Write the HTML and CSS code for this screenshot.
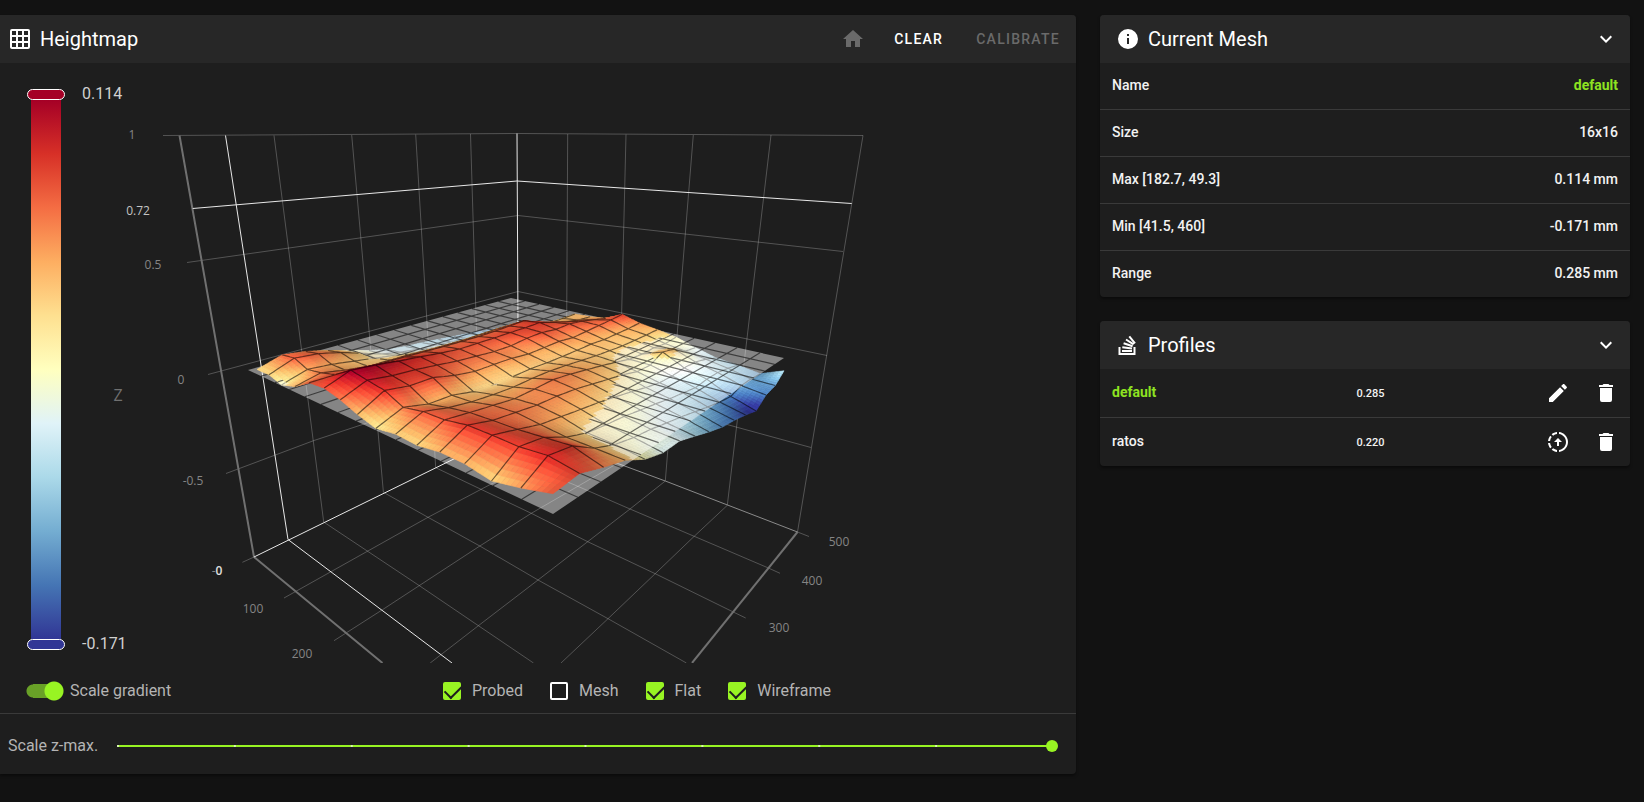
FILE: index.html
```html
<!DOCTYPE html>
<html lang="en">
<head>
<meta charset="utf-8">
<title>Heightmap</title>
<link rel="stylesheet" href="styles.css">
</head>
<body>
<main class="page">
  <section class="card heightmap">
    <header class="card-header card-header-flush">
      <svg class="icon" viewBox="0 0 24 24" aria-hidden="true"><path d="M10,4V8H14V4H10M16,4V8H20V4H16M16,10V14H20V10H16M16,16V20H20V16H16M14,20V16H10V20H14M8,20V16H4V20H8M8,14V10H4V14H8M8,8V4H4V8H8M10,14H14V10H10V14M4,2H20A2,2 0 0,1 22,4V20A2,2 0 0,1 20,22H4C2.92,22 2,21.1 2,20V4A2,2 0 0,1 4,2Z"/></svg>
      <h2 class="title">Heightmap</h2>
      <div class="actions">
        <button class="icon-button" type="button" disabled aria-label="Home"><svg class="icon" viewBox="0 0 24 24"><path d="M10,20V14H14V20H19V12H22L12,3L2,12H5V20H10Z"/></svg></button>
        <button class="text-button" type="button">CLEAR</button>
        <button class="text-button" type="button" disabled>CALIBRATE</button>
      </div>
    </header>

    <div class="chart">
      <svg class="plot" viewBox="0 63 1076 600" role="img" aria-label="Bed mesh surface">
        <g class="grid">
          <path d="M163 135.5L517 133.5L863 135.5"/>
          <path d="M187 262.5L518 215.5L843 251.5M208 374.5L518 291.5L827 355.5M226 473.5L314 440.5L364 424L519 366L736 427L811 447.5"/>
          <path d="M274 135.5L323.7 522M351.7 135L383.4 492.3M415.7 134.5L435.7 467.7M470.5 134L480 447"/>
          <path d="M567.7 134L566 445M626 134.5L618 463M693.3 135L665.3 481M771 135L727.3 505.3M863 135.5L797.5 532"/>
          <path d="M242.4 562.3L254 557M284 598L428 517.3L483 488.3L566 445M334 640.7L382 610L479.8 546L531.3 513.3L618 463M430.2 663L478.4 625.7L538 580L587.7 541.7L630 509L665.3 481M561 663L608 618.7L655.2 573.7L694.2 536.3L727.3 505.3"/>
          <path d="M323.7 522L368.3 551.7L418.8 585.3L478.4 625.7L533.5 663M383.4 492.3L428 517.3L479.8 546L538 580L608 618.7L686.4 663M435.7 467.7L531.3 513.3L587.7 541.7L655.2 573.7L733.3 612L745.7 618M480 447L574.8 485L630 509L694.2 536.3L767.7 567.7L780 573.3M797.5 532L809 536.5"/>
        </g>
        <g class="axis">
          <path d="M179.5 135.5L254 557L382.5 663"/>
          <path d="M692 663L797.5 532"/>
          <path class="axis-thin" d="M519 427L665.3 481L797.5 532"/>
        </g>
        <g class="pointer">
          <path d="M225.5 135.5L288 539.5L452 663M254 557L519 427M192.7 208.5L517 181L851.7 203.5M517 133.5L518.5 427"/>
        </g>
        <g id="surface"></g>
        <g class="labels">
          <text x="132" y="139">1</text>
          <text class="strong" x="138" y="215">0.72</text>
          <text x="153" y="269">0.5</text>
          <text x="181" y="384">0</text>
          <text class="axis-name" x="118" y="401">Z</text>
          <text x="193" y="485">-0.5</text>
          <text x="217" y="575">-<tspan class="cursor-value">0</tspan></text>
          <text x="253" y="613">100</text>
          <text x="302" y="658">200</text>
          <text x="779" y="632">300</text>
          <text x="812" y="585">400</text>
          <text x="839" y="546">500</text>
        </g>
      </svg>
      <div class="legend">
        <div class="legend-scale"><span class="knob knob-top"></span><span class="ramp"></span><span class="knob knob-bottom"></span></div>
        <div class="legend-values"><span>0.114</span><span>-0.171</span></div>
      </div>
    </div>

    <div class="options">
      <label class="switch"><input type="checkbox" role="switch" checked>Scale gradient</label>
      <div class="checks">
        <label class="check"><input type="checkbox" checked>Probed</label>
        <label class="check"><input type="checkbox">Mesh</label>
        <label class="check"><input type="checkbox" checked>Flat</label>
        <label class="check"><input type="checkbox" checked>Wireframe</label>
      </div>
    </div>

    <div class="scale-row">
      <label for="zmax">Scale z-max.</label>
      <input id="zmax" class="slider" type="range" min="0" max="8" value="8">
    </div>
  </section>

  <div class="side">
    <section class="card">
      <header class="card-header">
        <svg class="icon" viewBox="0 0 24 24" aria-hidden="true"><path d="M13,9H11V7H13M13,17H11V11H13M12,2A10,10 0 0,0 2,12A10,10 0 0,0 12,22A10,10 0 0,0 22,12A10,10 0 0,0 12,2Z"/></svg>
        <h2 class="title">Current Mesh</h2>
        <button class="icon-button" type="button" aria-label="Collapse current mesh"><svg class="icon" viewBox="0 0 24 24"><path d="M7.41,8.58L12,13.17L16.59,8.58L18,10L12,16L6,10L7.41,8.58Z"/></svg></button>
      </header>
      <table class="facts">
        <tbody>
          <tr><th scope="row">Name</th><td class="active">default</td></tr>
          <tr><th scope="row">Size</th><td>16x16</td></tr>
          <tr><th scope="row">Max [182.7, 49.3]</th><td>0.114 mm</td></tr>
          <tr><th scope="row">Min [41.5, 460]</th><td>-0.171 mm</td></tr>
          <tr><th scope="row">Range</th><td>0.285 mm</td></tr>
        </tbody>
      </table>
    </section>

    <section class="card">
      <header class="card-header">
        <svg class="icon icon-lines" viewBox="0 0 24 24" aria-hidden="true"><path d="M3.5 14V21H18.5V14M6 18H16M6.3 14.3L16 15.5M7.6 10.3L16.6 13.2M10 6.5L17.6 11.3M13.3 3.3L19 10.3"/></svg>
        <h2 class="title">Profiles</h2>
        <button class="icon-button" type="button" aria-label="Collapse profiles"><svg class="icon" viewBox="0 0 24 24"><path d="M7.41,8.58L12,13.17L16.59,8.58L18,10L12,16L6,10L7.41,8.58Z"/></svg></button>
      </header>
      <table class="profiles">
        <tbody>
          <tr>
            <th scope="row" class="active">default</th>
            <td class="range">0.285</td>
            <td class="tools"><div class="tool-list">
              <button class="icon-button" type="button" aria-label="Rename default"><svg class="icon" viewBox="0 0 24 24"><path d="M20.71,7.04C21.1,6.65 21.1,6 20.71,5.63L18.37,3.29C18,2.9 17.35,2.9 16.96,3.29L15.12,5.12L18.87,8.87M3,17.25V21H6.75L17.81,9.93L14.06,6.18L3,17.25Z"/></svg></button>
              <button class="icon-button" type="button" aria-label="Delete default"><svg class="icon" viewBox="0 0 24 24"><path d="M19,4H15.5L14.5,3H9.5L8.5,4H5V6H19M6,19A2,2 0 0,0 8,21H16A2,2 0 0,0 18,19V7H6V19Z"/></svg></button>
            </div></td>
          </tr>
          <tr>
            <th scope="row">ratos</th>
            <td class="range">0.220</td>
            <td class="tools"><div class="tool-list">
              <button class="icon-button" type="button" aria-label="Load ratos"><svg class="icon" viewBox="0 0 24 24"><path d="M13,2.03V4.05C17.39,4.59 20.5,8.58 19.96,12.97C19.5,16.61 16.64,19.5 13,19.93V21.93C18.5,21.38 22.5,16.5 21.95,11C21.5,6.25 17.73,2.5 13,2.03M11,2.06C9.05,2.25 7.19,3 5.67,4.26L7.1,5.74C8.22,4.84 9.57,4.26 11,4.06V2.06M4.26,5.67C3,7.19 2.25,9.04 2.05,11H4.05C4.24,9.58 4.8,8.23 5.69,7.1L4.26,5.67M2.06,13C2.26,14.96 3.03,16.81 4.27,18.33L5.69,16.9C4.81,15.77 4.24,14.42 4.06,13H2.06M7.1,18.37L5.67,19.74C7.18,21 9.04,21.79 11,22V20C9.58,19.82 8.23,19.25 7.1,18.37M12,8L8,12H11V16H13V12H16L12,8Z"/></svg></button>
              <button class="icon-button" type="button" aria-label="Delete ratos"><svg class="icon" viewBox="0 0 24 24"><path d="M19,4H15.5L14.5,3H9.5L8.5,4H5V6H19M6,19A2,2 0 0,0 8,21H16A2,2 0 0,0 18,19V7H6V19Z"/></svg></button>
            </div></td>
          </tr>
        </tbody>
      </table>
    </section>
  </div>
</main>
<script src="surface.js"></script>
</body>
</html>
```

FILE: styles.css
```css
* { box-sizing: border-box; }

body {
  margin: 0;
  min-height: 100vh;
  background: #121212;
  color: #fff;
  font-family: Roboto, "Liberation Sans", sans-serif;
  font-size: 14px;
}

.page {
  display: grid;
  grid-template-columns: 1076fr 530fr;
  align-items: start;
  gap: 24px;
  padding: 15px 14px 24px 0;
}

.side { display: grid; gap: 24px; }

.card {
  background: #1e1e1e;
  border-radius: 4px;
  box-shadow: 0 2px 3px rgba(0, 0, 0, .4);
  overflow: hidden;
}
.heightmap { border-radius: 0 4px 4px 0; }

.card-header {
  display: flex;
  align-items: center;
  gap: 8px;
  height: 48px;
  padding: 0 12px 0 16px;
  background: #272727;
}
.card-header-flush { padding: 0 16px 0 8px; }

.title { flex: 1; margin: 0; font-size: 20px; font-weight: 400; line-height: 32px; }

.icon { display: block; width: 24px; height: 24px; fill: currentColor; }
.icon-lines { fill: none; stroke: currentColor; stroke-width: 2; }

button {
  padding: 0;
  border: 0;
  background: none;
  color: #fff;
  font: inherit;
}
button:disabled { color: #6a6a6a; }

.actions { display: flex; align-items: center; }
.text-button { margin-left: 33px; font-weight: 500; letter-spacing: .09em; }
.actions .icon-button { margin-right: -4px; }

.chart { position: relative; }
.plot { display: block; width: 100%; height: auto; }
.grid path { fill: none; stroke: #fff; stroke-opacity: .24; }
.axis path { fill: none; stroke: #707070; stroke-width: 2; }
.axis .axis-thin { stroke: #8a8a8a; stroke-width: 1; }
.pointer path { fill: none; stroke: #e8e8e8; }
.labels text { font: 12px "Open Sans", sans-serif; fill: #858585; text-anchor: middle; }
.labels .strong { fill: #c4c4c4; }
.labels .cursor-value { fill: #e0e0e0; font-weight: 600; }
.labels .axis-name { font-size: 16px; fill: #707070; }
.wire { fill: none; stroke: #000; stroke-opacity: .55; stroke-width: 1.2; }
.plane { fill: #fff; fill-opacity: .46; }

.legend {
  position: absolute;
  top: 19px;
  bottom: 7px;
  left: 27px;
  display: flex;
  gap: 17px;
  color: #d0d0d0;
  font-size: 16px;
  line-height: 24px;
}
.legend-scale { display: flex; flex-direction: column; align-items: center; width: 38px; padding: 7px 0 6px; }
.ramp {
  flex: 1;
  width: 30px;
  background: linear-gradient(#a50026, #d73027, #f46d43, #fdae61, #fee090, #ffffbf, #e0f3f8, #abd9e9, #74add1, #4575b4, #313695);
}
.knob { width: 38px; height: 11px; border: 1px solid #fff; border-radius: 6px; }
.knob-top { background: #a50026; }
.knob-bottom { background: #313695; }
.legend-values { display: flex; flex-direction: column; justify-content: space-between; }

.options {
  display: flex;
  align-items: center;
  height: 51px;
  padding: 5px 26px 0;
  border-bottom: 1px solid #3a3a3a;
  color: #b4b4b4;
  font-size: 16px;
}
.options label { display: flex; align-items: center; }
.switch { gap: 6px; width: 417px; }
.switch input {
  appearance: none;
  width: 38px;
  height: 20px;
  margin: 0;
  background:
    radial-gradient(circle at 28px 10px, #98f423 9px, transparent 10px),
    radial-gradient(circle at 7px 10px, #69a127 6px, transparent 7px),
    linear-gradient(#69a127, #69a127) 7px 3px / 24px 14px no-repeat;
}
.checks { display: flex; gap: 27px; }
.check { gap: 11px; }
.check input {
  appearance: none;
  width: 18px;
  height: 18px;
  margin: 0;
  border: 2px solid #fff;
  border-radius: 2px;
}
.check input:checked { border-color: #98f423; background: #98f423; }
.check input:checked::after {
  content: "";
  display: block;
  width: 14px;
  height: 8px;
  border: solid #1e1e1e;
  border-width: 0 0 2px 2px;
  transform: translateY(1px) rotate(-45deg);
}

.scale-row {
  display: flex;
  align-items: center;
  gap: 13px;
  height: 60px;
  padding: 3px 18px 0 8px;
  color: #b4b4b4;
  font-size: 16px;
}
.slider {
  appearance: none;
  flex: 1;
  min-width: 0;
  height: 12px;
  margin: 0;
  padding: 0 0 0 6px;
  background:
    linear-gradient(90deg, #d8f5b0 2px, transparent 2px) 6px 5px / calc((100% - 12px) / 8) 2px repeat-x,
    linear-gradient(#98f423, #98f423) 6px 5px / calc(100% - 12px) 2px no-repeat;
  background-origin: border-box;
  background-clip: content-box;
}
.slider::-webkit-slider-thumb {
  appearance: none;
  width: 12px;
  height: 12px;
  border-radius: 50%;
  background: #98f423;
}

table { width: 100%; border-collapse: separate; border-spacing: 0; }
th, td { height: 46px; padding: 0 12px 2px; font-size: 14px; font-weight: 500; text-align: left; color: #f2f2f2; }
tr + tr th, tr + tr td { height: 47px; border-top: 1px solid #3a3a3a; }
.facts td { text-align: right; }
.profiles th, .profiles td { height: 48px; }
.profiles tr + tr th, .profiles tr + tr td { height: 49px; }
.profiles th { width: 48%; }
.profiles .range { padding: 0 2px; font-size: 11px; }
.profiles .tools { padding-bottom: 0; }
th.active, td.active { color: #8ee321; font-weight: 700; }
.tool-list { display: flex; justify-content: flex-end; gap: 24px; }
```

FILE: surface.js
```js
// Mesh heights in micrometres: one row per step from left to back, sixteen points from left to front.
const heights = [
  [8, 10, -10, 13, 61, 68, 49, 21, 0, 15, 11, 26, 26, 11, 33, 61],
  [52, 62, 32, 44, 64, 114, 98, 84, 45, 62, 64, 80, 80, 78, 88, 72],
  [40, 54, 25, 24, 60, 105, 84, 68, 20, 38, 52, 56, 58, 66, 74, 42],
  [15, 30, 10, 10, 55, 92, 78, 70, 20, 24, 42, 47, 34, 22, 20, 17],
  [-15, -5, -5, 10, 55, 82, 68, 46, 0, 18, 32, 38, 24, -5, -12, -27],
  [-45, -40, -20, 10, 52, 70, 56, 32, -2, 16, 38, 38, 14, -15, -30, -50],
  [-70, -60, -35, 5, 50, 62, 50, 34, 0, 22, 46, 32, 5, -22, -40, -50],
  [-80, -70, -40, 5, 50, 64, 44, 34, 6, 24, 38, 20, -8, -35, -56, -75],
  [-85, -75, -45, 5, 50, 66, 46, 26, 6, 20, 26, 8, -22, -46, -70, -101],
  [-92, -85, -50, 10, 54, 70, 60, 32, 8, 14, 14, -4, -38, -60, -88, -123],
  [-100, -90, -50, 15, 60, 72, 66, 38, 12, 8, 0, -22, -50, -70, -105, -134],
  [-108, -95, -50, 15, 68, 78, 58, 32, 18, 6, -16, -20, -50, -80, -120, -150],
  [-118, -100, -60, -10, 26, 54, 66, 42, 16, 4, -18, 20, -40, -72, -130, -170],
  [-128, -110, -75, -30, 6, 32, 58, 52, 22, 8, -12, 6, -40, -70, -110, -128],
  [-138, -120, -95, -50, 8, 18, 42, 62, 28, 12, -16, -36, -56, -80, -110, -115],
  [-145, -135, -110, -70, 14, 16, 26, 74, 38, 18, -5, -45, -80, -95, -115, -70]
];
const ramp = ['313695', '4575b4', '74add1', 'abd9e9', 'e0f3f8', 'ffffbf', 'fee090', 'fdae61', 'f46d43', 'd73027', 'a50026']
  .map(h => [0, 2, 4].map(k => parseInt(h.slice(k, k + 2), 16)));
const N = 15;
const STEPS = 6;

// Perspective mapping of the unit square onto a quadrilateral given by its left, front, right and back corners.
function project(l, f, r, b) {
  const d1 = [f[0] - r[0], f[1] - r[1]], d2 = [b[0] - r[0], b[1] - r[1]];
  const s = [l[0] - f[0] + r[0] - b[0], l[1] - f[1] + r[1] - b[1]];
  const den = d1[0] * d2[1] - d2[0] * d1[1];
  const g = (s[0] * d2[1] - d2[0] * s[1]) / den;
  const h = (d1[0] * s[1] - s[0] * d1[1]) / den;
  return (u, v) => {
    const w = 1 + g * u + h * v;
    return [0, 1].map(k => (l[k] + (f[k] - l[k] + g * f[k]) * u + (b[k] - l[k] + h * b[k]) * v) / w).concat(w);
  };
}
const flat = project([248, 370], [553, 514], [784, 358], [511, 298]);
const probed = project([257, 371], [553, 514], [784, 358], [520, 305]);

function sample(i, j) {
  const a = Math.min(Math.floor(i), N - 1), c = Math.min(Math.floor(j), N - 1);
  const s = i - a, t = j - c;
  return (heights[c][a] * (1 - s) + heights[c][a + 1] * s) * (1 - t) +
    (heights[c + 1][a] * (1 - s) + heights[c + 1][a + 1] * s) * t;
}
function point(i, j) {
  const p = probed(i / N, j / N);
  return p[0].toFixed(1) + ' ' + (p[1] - sample(i, j) * 0.195 / p[2]).toFixed(1);
}
function slope(i, j) {
  return sample(i, Math.min(N, j + 0.6)) - sample(i, Math.max(0, j - 0.6)) -
    0.4 * (sample(Math.min(N, i + 0.6), j) - sample(Math.max(0, i - 0.6), j));
}
function color(i, j) {
  const z = sample(i, j);
  const t = Math.max(0, Math.min(9.999, ((z > 0 ? z + 5 : z * 1.1 + 5 * Math.max(0, 1 + z / 20)) + 171) / 28.5));
  const k = Math.floor(t);
  const light = 0.96 + 0.16 * Math.max(-1, Math.min(1, slope(i, j) / 30));
  return 'rgb(' + ramp[k].map((c, n) => Math.min(255, Math.round((c + (ramp[k + 1][n] - c) * (t - k)) * light))) + ')';
}

const cells = [];
for (let i = 0; i < N; i++) for (let j = 0; j < N; j++) cells.push([i, j]);
const depth = c => probed(c[0] / N, c[1] / N)[2];
cells.sort((a, b) => depth(b) - depth(a));

function layer(above) {
  let out = '';
  const shown = (i, j) => (sample(i, j) >= 0) === above;
  for (const [i, j] of cells) {
    const d = 1 / STEPS;
    for (let a = 0; a < STEPS; a++) for (let c = STEPS - 1; c >= 0; c--) {
      const x = i + a * d, y = j + c * d;
      if (!shown(x + d / 2, y + d / 2)) continue;
      const f = color(x + d / 2, y + d / 2);
      out += `<path fill="${f}" stroke="${f}" stroke-width=".6" d="M${point(x, y)}L${point(x + d, y)}L${point(x + d, y + d)}L${point(x, y + d)}Z"/>`;
    }
    let line = '';
    for (let a = 0; a < STEPS; a++) {
      const s = a * d;
      if (i > 0 && shown(i, j + s + d / 2)) line += `M${point(i, j + s)}L${point(i, j + s + d)}`;
      if (j < N - 1 && shown(i + s + d / 2, j + 1)) line += `M${point(i + s, j + 1)}L${point(i + s + d, j + 1)}`;
    }
    if (line) out += `<path class="wire" d="${line}"/>`;
  }
  return out;
}
const at = (u, v) => flat(u, v).slice(0, 2).map(n => n.toFixed(1)).join(' ');
let mesh = '';
for (let k = 1; k < N; k++) mesh += `M${at(k / N, 0)}L${at(k / N, 1)}M${at(0, k / N)}L${at(1, k / N)}`;
document.getElementById('surface').innerHTML = layer(false) +
  `<path class="plane" d="M${at(0, 0)}L${at(1, 0)}L${at(1, 1)}L${at(0, 1)}Z"/><path class="wire" d="${mesh}"/>` + layer(true);
```
